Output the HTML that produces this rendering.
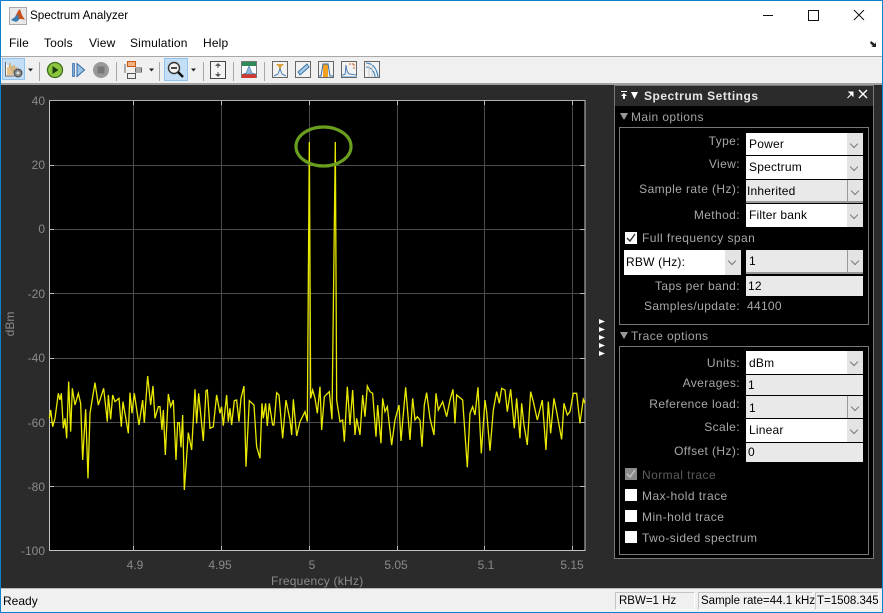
<!DOCTYPE html>
<html><head><meta charset="utf-8"><style>
html,body{margin:0;padding:0;width:883px;height:613px;overflow:hidden;background:#2b2b2b}
*{box-sizing:border-box}
body{font-family:"Liberation Sans",sans-serif;font-size:12px;position:relative}
.a{position:absolute}
.t{position:absolute;white-space:nowrap;line-height:14px}
.l{position:absolute;white-space:nowrap;line-height:14px;color:#a8a8a8;right:143px;letter-spacing:.4px}
.c{position:absolute;left:746px;width:117px;background:#fff;color:#000;line-height:22px;padding-left:3px;overflow:hidden;letter-spacing:.2px}
.g{background:#e9e9e9;border-bottom:2px solid #999}
.c i{position:absolute;right:0;top:0;bottom:0;width:16px;background:#e4e4e4}
.c i:after{content:"";position:absolute;left:4px;top:8px;width:5px;height:5px;border-right:1px solid #777;border-bottom:1px solid #777;transform:rotate(45deg)}
.e{position:absolute;left:746px;width:117px;background:#e9e9e9;color:#000;padding-left:2px;line-height:20px;letter-spacing:.2px}
.k{position:absolute;left:625px;width:12px;height:12px;background:#fff}
.o{color:#a8a8a8;left:642px;letter-spacing:.45px}
.m{top:36px;color:#000;font-size:12px;letter-spacing:.15px}
.y{color:#8a8a8a;right:838px;font-size:12px}
.x{color:#8a8a8a;top:558px;transform:translateX(-50%)}
.s{position:absolute;top:592px;height:18px;border:1px solid #c4c4c4;border-bottom-color:#fff;border-right-color:#fff;line-height:16px;padding-left:2px;color:#000;white-space:nowrap;font-size:11.5px}
.sep{position:absolute;top:62px;height:19px;width:1px;background:#a8a8a8}
</style></head><body>
<div class="a" style="left:0;top:0;width:883px;height:57px;background:#fff"></div>
<div class="a" style="left:0;top:56px;width:883px;height:1px;background:#a8a8a8"></div>
<div class="a" style="left:0;top:57px;width:883px;height:26px;background:#f0f0f0"></div>
<div class="a" style="left:0;top:83px;width:883px;height:2px;background:#a0a0a0"></div>
<div class="a" style="left:0;top:588px;width:883px;height:25px;background:#f0f0f0;border-top:1px solid #bbb"></div>

<svg class="a" style="left:9px;top:7px" width="18" height="18" viewBox="0 0 18 18"><rect x=".5" y=".5" width="17" height="17" fill="#e8e8e8" stroke="#aaa"/><path d="M2 13l4-3 3-6 2-2 2 6 3 5-3-1-3 0-3 2z" fill="#c8501c"/><path d="M2 13l4-3 3-3 1 6-3 2z" fill="#3a7ab5"/></svg>
<div class="t" style="left:30px;top:9px;color:#000;font-size:11.7px">Spectrum Analyzer</div>
<svg class="a" style="left:760px;top:8px" width="110" height="16" viewBox="0 0 110 16" fill="none" stroke="#111"><path d="M3 7.500h10"/><rect x="48.500" y="2.500" width="10" height="10"/><path d="M94 2l10 10M104 2l-10 10"/></svg>
<div class="t m" style="left:9px">File</div><div class="t m" style="left:44px">Tools</div><div class="t m" style="left:89px">View</div><div class="t m" style="left:130px">Simulation</div><div class="t m" style="left:203px">Help</div>
<svg class="a" style="left:870px;top:41px" width="9" height="7" viewBox="0 0 9 7"><path d="M1 0l4 3 1-2v5H1l2-1-3-3z" fill="#222"/></svg>

<!-- toolbar -->
<div class="a" style="left:2px;top:58px;width:23px;height:22px;background:#c4def5;border:1px solid #90c4ef"></div>
<svg class="a" style="left:4px;top:60px" width="20" height="19" viewBox="0 0 20 19"><path d="M1.500 2v14h9" fill="#fff" stroke="#666"/><path d="M4 15V7M6 15V3M8 15V6M10 12V5M12 9V7" stroke="#d8a14c" stroke-width="1.300"/><circle cx="14" cy="13" r="4" fill="#888" stroke="#444"/><circle cx="14" cy="13" r="1.500" fill="#ddd"/></svg>
<svg class="a" style="left:0;top:58px" width="400" height="25" viewBox="0 0 400 25">
<path d="M28 10.500h5l-2.500 3zM149 10.500h5l-2.500 3zM191 10.500h5l-2.500 3z" fill="#222"/>
<circle cx="55" cy="12" r="7.500" fill="#8cc63f" stroke="#3c6e20" stroke-width="1.300"/><path d="M52.500 8l6 4-6 4z" fill="#1e3d12"/>
<path d="M72.500 5.500h2v13h-2z" fill="#7ea8d4" stroke="#2f6aa3" stroke-width=".7"/><path d="M77 5.500l7.500 6.500-7.500 6.500z" fill="#9cc3e8" stroke="#2f6aa3"/>
<circle cx="101" cy="12" r="8" fill="#999"/><rect x="97.500" y="8.500" width="7" height="7" fill="#777"/>
<rect x="127.500" y="3.500" width="8" height="5" fill="#f4b183" stroke="#c55a11"/><rect x="127.500" y="15.500" width="8" height="5" fill="#eee" stroke="#555"/><rect x="135.500" y="10" width="6" height="4" fill="#eee" stroke="#666"/><path d="M125 6v9M136 12h5" stroke="#666" fill="none"/>
<rect x="164.500" y=".5" width="23" height="22" fill="#c4def5" stroke="#90c4ef"/>
<circle cx="174" cy="10" r="5.500" fill="#f5f5f5" stroke="#333" stroke-width="1.400"/><path d="M171 10h6" stroke="#111" stroke-width="1.500"/><path d="M178 14l5 5" stroke="#111" stroke-width="2.500"/>
<rect x="210.500" y="3.500" width="15" height="17" fill="#f4f4f4" stroke="#444"/><path d="M218 5l-3 3h6zM218 19l-3-3h6z" fill="#555"/><path d="M218 8v2M218 14v2" stroke="#555"/>
<rect x="241.500" y="3.500" width="15" height="16" fill="#fff" stroke="#777"/><rect x="242" y="4" width="14" height="4" fill="#2e8b57"/><rect x="242" y="16" width="14" height="4" fill="#d03a2e"/><path d="M243 16l3-1 3-7 3 7 4 1z" fill="#8fb9dc" stroke="#4276a8" stroke-width=".6"/>
<g fill="#f2f2f2" stroke="#666"><rect x="272.500" y="3.500" width="15" height="16"/><rect x="295.500" y="3.500" width="15" height="16"/><rect x="318.500" y="3.500" width="15" height="16"/><rect x="341.500" y="3.500" width="15" height="16"/><rect x="364.500" y="3.500" width="15" height="16"/></g>
<path d="M276 6h8l-3 3v3h-2V9z" fill="#d8a238"/><path d="M274 18l4-2 2-5 2 5 4 2" fill="none" stroke="#4a7fb5"/>
<path d="M298 14l9-8 2 3-9 8z" fill="#a8c8e4" stroke="#3d78ad"/>
<rect x="323" y="6" width="5" height="13" fill="#f4a020"/><path d="M319 18h2l2-12h5l2 12h3" fill="none" stroke="#2f6aa3"/>
<path d="M342 18h15v1h-15z" fill="#9dc3e2"/><path d="M342 17c4 0 3-1 4-10 1 8 2 8 4 9l6 1" fill="#dbe8f3" stroke="#2f6aa3" stroke-width=".8"/><path d="M349 6h6M354 6v6" stroke="#d2602a" stroke-dasharray="2 1"/>
<path d="M366 5c7 0 11 6 12 14M366 9c5 0 9 5 9 10" fill="none" stroke="#3a82c0" stroke-width="1.100"/><path d="M369 6v13M372 6v13" stroke="#ccc"/>
</svg>
<div class="sep" style="left:39px"></div><div class="sep" style="left:116px"></div><div class="sep" style="left:159px"></div><div class="sep" style="left:203px"></div><div class="sep" style="left:233px"></div><div class="sep" style="left:264px"></div>

<!-- plot -->
<svg class="a" style="left:0;top:0" width="600" height="588" viewBox="0 0 600 588">
<rect x="49" y="100" width="536" height="451" fill="#000"/>
<g stroke="#4c4c4c" stroke-width="1"><path d="M133.500 100V551M221.500 100V551M309.500 100V551M397.500 100V551M484.500 100V551M572.500 100V551"/></g>
<g stroke="#4c4c4c" stroke-width="1"><path d="M49 165.500H585M49 229.500H585M49 293.500H585M49 358.500H585M49 422.500H585M49 486.500H585"/></g>
<path d="M49.500 100V550.500H585V100" fill="none" stroke="#c4c4c4" stroke-width="1"/><path d="M49 100.500H585" stroke="#b0b0b0"/>
<g stroke="#bbb"><path d="M133.500 100v5M221.500 100v5M309.500 100v5M397.500 100v5M484.500 100v5M572.500 100v5M133.500 546v5M221.500 546v5M309.500 546v5M397.500 546v5M484.500 546v5M572.500 546v5M49 165.500h5M49 229.500h5M49 293.500h5M49 358.500h5M49 422.500h5M49 486.500h5M580 165.500h5M580 229.500h5M580 293.500h5M580 358.500h5M580 422.500h5M580 486.500h5"/></g>
<g fill="none" stroke="#eaea00" stroke-linejoin="miter">
<polyline transform="translate(0 360) scale(.3333)" stroke-width="3.900" points="148,175 152,150 158,200 165,175 175,100 180,120 184,100 190,205 195,175 200,235 206,65 212,215 217,85 225,135 235,100 242,130 248,300 257,148 264,355 270,160 285,68 295,135 303,110 311,85 322,185 325,105 332,178 338,105 345,125 357,115 364,200 369,125 385,220 390,98 396,160 403,100 417,195 428,120 433,188 443,48 452,135 459,78 465,175 475,140 480,140 486,210 490,150 496,285 505,102 512,140 520,120 528,300 533,188 538,188 543,262 548,165 553,390 565,218 575,270 585,88 590,190 596,100 610,243 618,92 622,90 630,205 640,200 650,105 660,160 665,140 670,197 680,105 685,185 690,145 695,195 703,122 710,120 717,185 723,115 732,78 738,320 748,122 762,135 770,260 780,295 786,130 790,175 797,130 802,198 808,130 818,195 822,195 830,98 837,105 848,235 858,120 870,180"/>
<polyline transform="translate(290 360) scale(.3333)" stroke-width="3.900" points="0,180 5,225 10,118 20,228 30,185 45,155 52,185 58,-654 62,115 68,90 75,115 82,160 90,80 95,210 103,110 118,95 126,178 136,-654 140,120 150,185 158,180 163,245 172,80 180,195 188,90 195,225 200,175 210,225 218,105 225,170 232,78 240,95 248,100 258,230 263,135 273,250 278,115 285,155 292,140 305,255 315,180 327,135 333,243 347,82 360,240 368,115 375,180 382,170 390,180 396,260 403,135 410,98 420,175 432,225 438,100 445,150 458,125 470,170 480,120 489,88 495,190 500,105 518,120 532,322 540,160 548,140 555,165 564,82 574,280 585,120 590,155 600,272 610,150 620,95 628,130 635,85 645,90 652,155 662,88 673,205 680,115 690,235 695,130 702,195 712,255 722,95 730,125 742,180 757,120 768,270 775,125 782,220 792,115 800,155 815,238 822,130 832,165 840,155 850,100 860,100 870,190 880,118 885,130"/>
</g>
<ellipse cx="323.500" cy="146.500" rx="27.500" ry="19.500" fill="none" stroke="#6a9e1f" stroke-width="3.200"/>
<text transform="translate(14 324) rotate(-90)" text-anchor="middle" font-family="Liberation Sans" font-size="12" fill="#8a8a8a">dBm</text>
</svg>
<div class="t y" style="top:94px">40</div><div class="t y" style="top:158px">20</div><div class="t y" style="top:222px">0</div><div class="t y" style="top:287px">-20</div><div class="t y" style="top:351px">-40</div><div class="t y" style="top:416px">-60</div><div class="t y" style="top:480px">-80</div><div class="t y" style="top:544px">-100</div>
<div class="t x" style="left:135px">4.9</div><div class="t x" style="left:220px">4.95</div><div class="t x" style="left:312px">5</div><div class="t x" style="left:396px">5.05</div><div class="t x" style="left:486px">5.1</div><div class="t x" style="left:572px">5.15</div>
<div class="t" style="left:271px;top:574px;color:#8a8a8a;letter-spacing:.25px">Frequency (kHz)</div>

<svg class="a" style="left:599px;top:319px" width="8" height="37" viewBox="0 0 8 37" fill="#fff"><path d="M0 0l6 2.500-6 2.500zM0 8l6 2.500-6 2.500zM0 16l6 2.500-6 2.500zM0 24l6 2.500-6 2.500zM0 32l6 2.500-6 2.500z"/></svg>

<!-- panel -->
<div class="a" style="left:614px;top:85px;width:260px;height:474px;background:#000;border:1px solid #777"></div>
<div class="a" style="left:615px;top:86px;width:258px;height:20px;background:#2b2b2b"></div>
<svg class="a" style="left:620px;top:90px" width="20" height="10" viewBox="0 0 20 10" fill="#fff"><path d="M1 1h6v1H1zM4 3l3 3H5v3H3V6H1zM11 2h7l-3.500 7z"/></svg>
<div class="t" style="left:644px;top:89px;color:#e6e6e6;font-weight:bold;letter-spacing:.5px">Spectrum Settings</div>
<svg class="a" style="left:846px;top:89px" width="22" height="11" viewBox="0 0 22 11"><path d="M1.500 9l4-4M3 3h4v4z" stroke="#fff" fill="#fff"/><path d="M13 1l8 8M21 1l-8 8" stroke="#fff" stroke-width="1.400"/></svg>
<svg class="a" style="left:620px;top:113px" width="8" height="7" viewBox="0 0 8 7"><path d="M0 0h8L4 7z" fill="#999"/></svg>
<div class="t" style="left:631px;top:110px;color:#a3a3a3;letter-spacing:.4px">Main options</div>
<div class="a" style="left:619px;top:127px;width:250px;height:198px;border:1px solid #777"></div>
<div class="l" style="top:134px">Type:</div><div class="c" style="top:133px;height:22px;line-height:23px">Power<i></i></div>
<div class="l" style="top:157px">View:</div><div class="c" style="top:156px;height:23px">Spectrum<i></i></div>
<div class="l" style="top:182px">Sample rate (Hz):</div><div class="c g" style="top:180px;height:23px;padding-left:1px">Inherited<i style="border-left:1px solid #999"></i></div>
<div class="l" style="top:208px">Method:</div><div class="c" style="top:204px;height:23px">Filter bank<i></i></div>
<div class="k" style="top:232px"></div><svg class="a" style="left:625px;top:232px" width="12" height="12"><path d="M2 6l3 3 5-7" fill="none" stroke="#333" stroke-width="1.400"/></svg>
<div class="t o" style="top:231px">Full frequency span</div>
<div class="c" style="left:624px;top:250px;height:25px;line-height:24px;padding-left:2px">RBW (Hz):<i></i></div>
<div class="c g" style="top:250px;height:24px">1<i style="border-left:1px solid #999"></i></div>
<div class="l" style="top:279px">Taps per band:</div><div class="e" style="top:276px;height:20px">12</div>
<div class="l" style="top:299px">Samples/update:</div><div class="t" style="left:747px;top:299px;color:#a8a8a8;letter-spacing:.3px">44100</div>
<svg class="a" style="left:620px;top:332px" width="8" height="7" viewBox="0 0 8 7"><path d="M0 0h8L4 7z" fill="#999"/></svg>
<div class="t" style="left:631px;top:329px;color:#a3a3a3;letter-spacing:.4px">Trace options</div>
<div class="a" style="left:619px;top:346px;width:250px;height:209px;border:1px solid #777"></div>
<div class="l" style="top:356px">Units:</div><div class="c" style="top:351px;height:23px;line-height:24px">dBm<i></i></div>
<div class="l" style="top:376px">Averages:</div><div class="e" style="top:375px;height:20px;line-height:20px">1</div>
<div class="l" style="top:397px">Reference load:</div><div class="c g" style="top:396px;height:22px;border-bottom:0;line-height:24px">1<i style="border-left:1px solid #999"></i></div>
<div class="l" style="top:420px">Scale:</div><div class="c" style="top:419px;height:23px">Linear<i></i></div>
<div class="l" style="top:444px">Offset (Hz):</div><div class="e" style="top:443px;height:19px;line-height:18px">0</div>
<div class="k" style="top:468px;background:#8a8a8a"></div><svg class="a" style="left:625px;top:468px" width="12" height="12"><path d="M2 6l3 3 5-7" fill="none" stroke="#c8c8c8" stroke-width="1.300"/></svg>
<div class="t o" style="top:468px;color:#5c5c5c">Normal trace</div>
<div class="k" style="top:489px"></div><div class="t o" style="top:489px">Max-hold trace</div>
<div class="k" style="top:510px"></div><div class="t o" style="top:510px">Min-hold trace</div>
<div class="k" style="top:531px"></div><div class="t o" style="top:531px">Two-sided spectrum</div>

<!-- status -->
<div class="t" style="left:3px;top:594px;color:#000">Ready</div>
<div class="s" style="left:615px;width:80px;padding-left:3px">RBW=1 Hz</div>
<div class="s" style="left:698px;width:115px">Sample rate=44.1 kHz</div>
<div class="s" style="left:815px;width:64px;padding-left:1px">T=1508.345</div>

<!-- window border -->
<div class="a" style="left:0;top:0;width:883px;height:613px;border:1px solid #0f80d0;pointer-events:none"></div>
</body></html>
